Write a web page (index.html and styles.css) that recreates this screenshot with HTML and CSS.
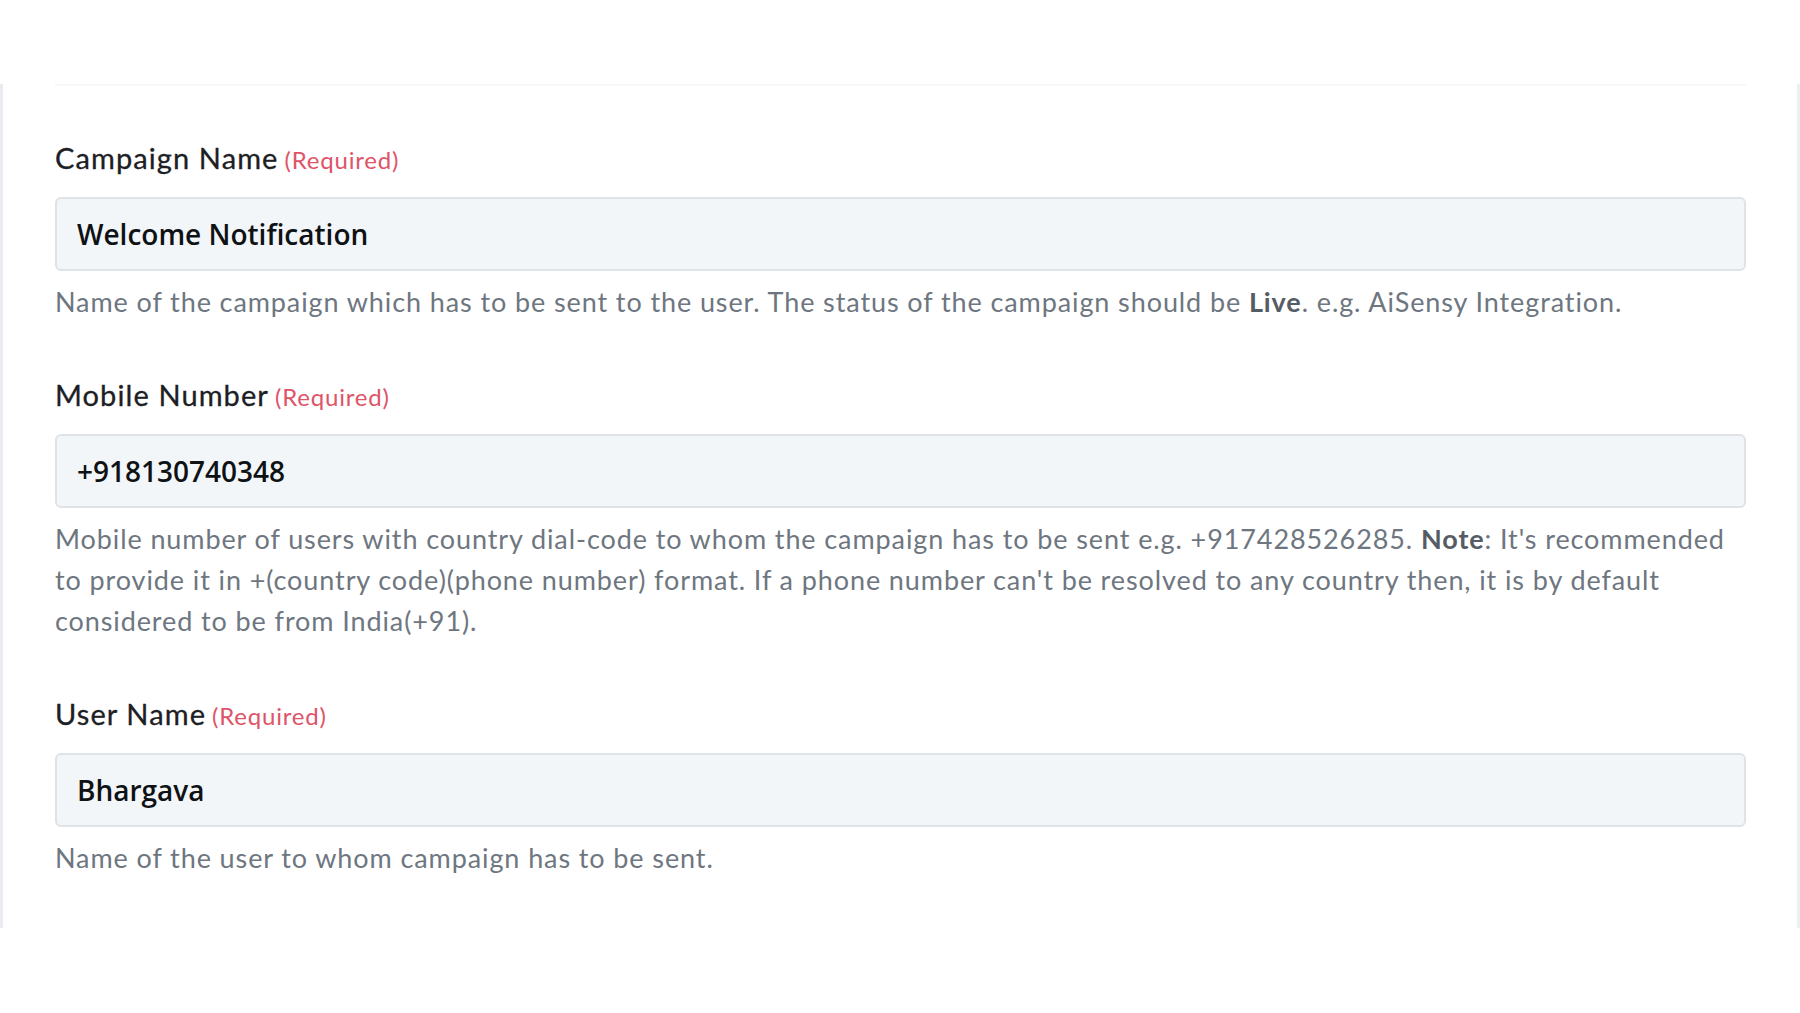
FILE: index.html
```html
<!DOCTYPE html>
<html lang="en">
<head>
<meta charset="utf-8">
<title>Campaign parameters</title>
<link rel="stylesheet" href="styles.css">
</head>
<body>
<div class="page">
  <div class="frame">
    <div class="content">
      <div class="rule"></div>
      <div class="field">
        <label class="label">Campaign Name<span class="req">(Required)</span></label>
        <div class="input">Welcome Notification</div>
        <p class="help">Name of the campaign which has to be sent to the user. The status of the campaign should be <b>Live</b>. e.g. AiSensy Integration.</p>
      </div>
      <div class="field">
        <label class="label">Mobile Number<span class="req">(Required)</span></label>
        <div class="input">+918130740348</div>
        <p class="help">Mobile number of users with country dial-code to whom the campaign has to be sent e.g. +917428526285. <b>Note</b>: It's recommended to provide it in +(country code)(phone number) format. If a phone number can't be resolved to any country then, it is by default considered to be from India(+91).</p>
      </div>
      <div class="field">
        <label class="label">User Name<span class="req">(Required)</span></label>
        <div class="input">Bhargava</div>
        <p class="help">Name of the user to whom campaign has to be sent.</p>
      </div>
    </div>
  </div>
</div>
</body>
</html>
```
FILE: styles.css
```css
html, body {
  margin: 0;
  padding: 0;
  background: #ffffff;
}
body {
  font-family: "Lato", "Liberation Sans", sans-serif;
}
.page {
  padding-top: 84px;
  height: 1013px;
  box-sizing: border-box;
}
.frame {
  height: 844px;
  box-sizing: border-box;
  border-left: 3px solid #e8ebf0;
  border-right: 3px solid #eceef2;
}
.content {
  margin-left: 52px;
  width: 1691px;
}
.rule {
  height: 2px;
  background: #f5f7f9;
  margin-bottom: 55px;
}
.field {
  margin-bottom: 56px;
}
.label {
  display: block;
  font-size: 29px;
  line-height: 34px;
  letter-spacing: 1.1px;
  color: #1c2024;
  -webkit-text-stroke: 0.3px #1c2024;
  margin-bottom: 20px;
}
.req {
  font-size: 24px;
  letter-spacing: 0.8px;
  color: #de5468;
  -webkit-text-stroke: 0;
  margin-left: 6px;
}
.input {
  height: 74px;
  box-sizing: border-box;
  border: 2px solid #dfe3e8;
  border-radius: 6px;
  background: #f3f6f9;
  padding: 0 20px;
  display: flex;
  align-items: center;
  font-family: "Open Sans", "Liberation Sans", sans-serif;
  font-weight: 600;
  font-size: 28px;
  letter-spacing: 0;
  color: #0f1215;
}
.help {
  margin: 10px 0 0;
  font-size: 27px;
  line-height: 41px;
  letter-spacing: 0.9px;
  color: #6e767f;
}
.help b {
  color: #555c64;
  font-weight: 700;
}
```
